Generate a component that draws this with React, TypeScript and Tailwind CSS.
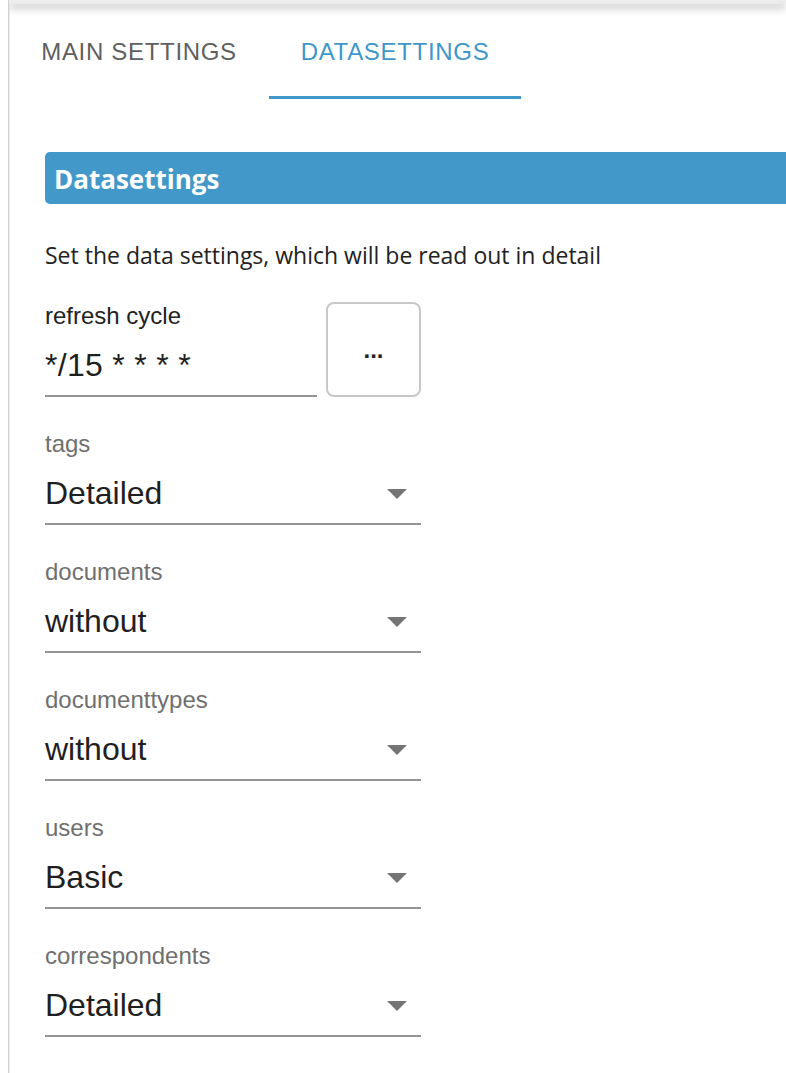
import React from "react";

const labelFont = { fontFamily: '"Liberation Sans", Arial, sans-serif' };

function Arrow() {
  return (
    <svg width="20" height="10" viewBox="0 0 20 10" className="shrink-0">
      <path d="M0 0 L20 0 L10 10 Z" fill="#757575" />
    </svg>
  );
}

function SelectField({ label, value }: { label: string; value: string }) {
  return (
    <div className="mt-[33px] w-[376px]" style={labelFont}>
      <div className="h-[28px] text-[24px] leading-[28px] text-[#6f6f6f]">{label}</div>
      <div className="mt-[15px] flex h-[40px] items-center justify-between border-b-2 border-[#949494] pb-[10px] box-content">
        <span className="text-[32px] leading-[40px] text-[#1f1f1f]">{value}</span>
        <span className="mr-[14px] mt-[2px]">
          <Arrow />
        </span>
      </div>
    </div>
  );
}

export default function App() {
  return (
    <div className="min-h-screen bg-white pl-[8px]">
      <div className="min-h-[1073px] border-l border-[#d2d2d2] shadow-[inset_1px_0_0_#eeeeee] overflow-hidden">
        <div className="relative z-10 h-[4px] bg-[#ececec] shadow-[0_3px_10px_rgba(0,0,0,0.38)]" />
        <div className="flex" style={labelFont}>
          <div className="flex h-[95px] w-[260px] items-center justify-center border-b-[3px] border-transparent pt-[4px] text-[24px] uppercase tracking-[0.02857em] text-[#5f5f5f]">
            Main Settings
          </div>
          <div className="flex h-[95px] w-[252px] items-center justify-center border-b-[3px] border-[#3f97c9] pt-[4px] text-[24px] uppercase tracking-[0.02857em] text-[#3f97c9]">
            Datasettings
          </div>
        </div>
        <div className="pl-[36px]">
          <div
            className="mt-[53px] flex h-[52px] items-center rounded-l-[5px] bg-[#4298c9] pl-[9px] pt-[2px] text-[26px] font-bold text-white"
            style={{ fontFamily: '"Open Sans", "Noto Sans", sans-serif' }}
          >
            Datasettings
          </div>
          <div
            className="mt-[36px] h-[30px] text-[23px] leading-[30px] text-[#222222]"
            style={{ fontFamily: '"Open Sans", "Noto Sans", sans-serif' }}
          >
            Set the data settings, which will be read out in detail
          </div>
          <div className="mt-[32px] flex items-start gap-[9px]" style={labelFont}>
            <div className="w-[272px]">
              <div className="h-[28px] text-[24px] leading-[28px] text-[#222222]">refresh cycle</div>
              <div className="mt-[15px] h-[40px] border-b-2 border-[#949494] pb-[10px] box-content">
                <span className="text-[32px] leading-[40px] tracking-[0.3px] text-[#1f1f1f]">*/15 * * * *</span>
              </div>
            </div>
            <button className="flex h-[95px] w-[95px] items-center justify-center rounded-[8px] border-2 border-[#c8c8c8] bg-white text-[24px] font-bold leading-none text-[#222222]">
              ...
            </button>
          </div>
          <SelectField label="tags" value="Detailed" />
          <SelectField label="documents" value="without" />
          <SelectField label="documenttypes" value="without" />
          <SelectField label="users" value="Basic" />
          <SelectField label="correspondents" value="Detailed" />
        </div>
      </div>
    </div>
  );
}
